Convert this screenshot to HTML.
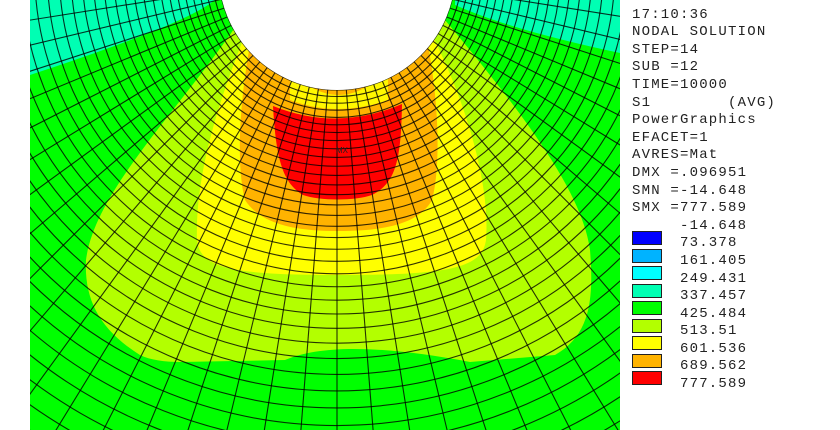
<!DOCTYPE html>
<html><head><meta charset="utf-8"><style>
html,body{margin:0;padding:0;background:#fff;width:840px;height:430px;overflow:hidden;position:relative}
#txt{position:absolute;left:632px;top:-11px;height:420px;overflow:hidden;font-family:"Liberation Mono",monospace;font-size:14px;letter-spacing:1.2px;line-height:17.6px;color:#222;white-space:pre}
.b{position:absolute;left:632px;width:28px;height:12px;border:1px solid #222}
</style></head><body>
<svg id="s" width="840" height="430" style="position:absolute;left:0;top:0">
<defs><clipPath id="c"><rect x="30" y="0" width="590" height="430"/></clipPath></defs>
<g clip-path="url(#c)">
<rect x="30" y="0" width="590" height="430" fill="#00ff00"/>
<path d="M30 0 L215 0 C190 20 120 45 30 75 Z" fill="#00ffb3"/>
<path d="M455 0 L620 0 L620 53 C560 40 500 25 455 5 Z" fill="#00ffb3"/>
<path d="M240 20 C180 110 95 190 86 260 C84 300 100 330 140 355 C150 360 165 362 180 362 L285 360 C320 345 380 345 470 362 L555 355 C590 335 594 300 590 250 C582 190 520 110 445 20 Z" fill="#b3ff00"/>
<path d="M245 35 C215 110 195 180 197 240 C200 268 230 275 340 275 C450 275 482 268 486 240 C490 190 470 110 432 35 Z" fill="#ffff00"/>
<path d="M250 45 C238 110 237 170 245 200 C262 226 300 231 338 231 C378 231 418 226 432 200 C440 170 440 110 428 45 Z" fill="#ffb300"/>
<path d="M290 70 Q338 120 388 70 L388 100 Q338 118 290 100 Z" fill="#ffff00" opacity="0.9"/>
<path d="M273 106 Q338 132 402 104 C401 160 396 183 372 195 C355 201 320 201 303 195 C283 183 276 160 273 106 Z" fill="#ff0000"/>
<g id="mesh" stroke="#000" stroke-opacity="0.8" stroke-width="1.1" fill="none"></g>
<text x="336" y="153" font-family="Liberation Sans,sans-serif" font-size="8" fill="#222">MX</text>
<circle cx="337" cy="-28.5" r="118.5" fill="#fff"/>
</g>
</svg>
<div id="txt">MAY 19 2016
17:10:36
NODAL SOLUTION
STEP=14
SUB =12
TIME=10000
S1        (AVG)
PowerGraphics
EFACET=1
AVRES=Mat
DMX =.096951
SMN =-14.648
SMX =777.589
     -14.648
     73.378
     161.405
     249.431
     337.457
     425.484
     513.51
     601.536
     689.562
     777.589</div>
<div class="b" style="top:231px;background:#0000ff"></div>
<div class="b" style="top:248.5px;background:#00b3ff"></div>
<div class="b" style="top:266px;background:#00ffff"></div>
<div class="b" style="top:283.5px;background:#00ffb3"></div>
<div class="b" style="top:301px;background:#00ff00"></div>
<div class="b" style="top:318.5px;background:#b3ff00"></div>
<div class="b" style="top:336px;background:#ffff00"></div>
<div class="b" style="top:353.5px;background:#ffb300"></div>
<div class="b" style="top:371px;background:#ff0000"></div>
<script>
(function(){
var g=document.getElementById('mesh'),ns='http://www.w3.org/2000/svg';
var cx=337,cy=-28.5,r0=118.5,s=6.5,r=r0,rs=[];
while(r<800){rs.push(r);r+=s;s*=1.035;}
var rmax=rs[rs.length-1];
rs.forEach(function(R){var c=document.createElementNS(ns,'circle');c.setAttribute('cx',cx);c.setAttribute('cy',cy);c.setAttribute('r',R.toFixed(2));g.appendChild(c);});
for(var a=0;a<=180;a+=4.5){var t=a*Math.PI/180;var l=document.createElementNS(ns,'line');
l.setAttribute('x1',(cx+r0*Math.cos(t)).toFixed(2));l.setAttribute('y1',(cy+r0*Math.sin(t)).toFixed(2));
l.setAttribute('x2',(cx+rmax*Math.cos(t)).toFixed(2));l.setAttribute('y2',(cy+rmax*Math.sin(t)).toFixed(2));g.appendChild(l);}
})();
</script>
</body></html>
